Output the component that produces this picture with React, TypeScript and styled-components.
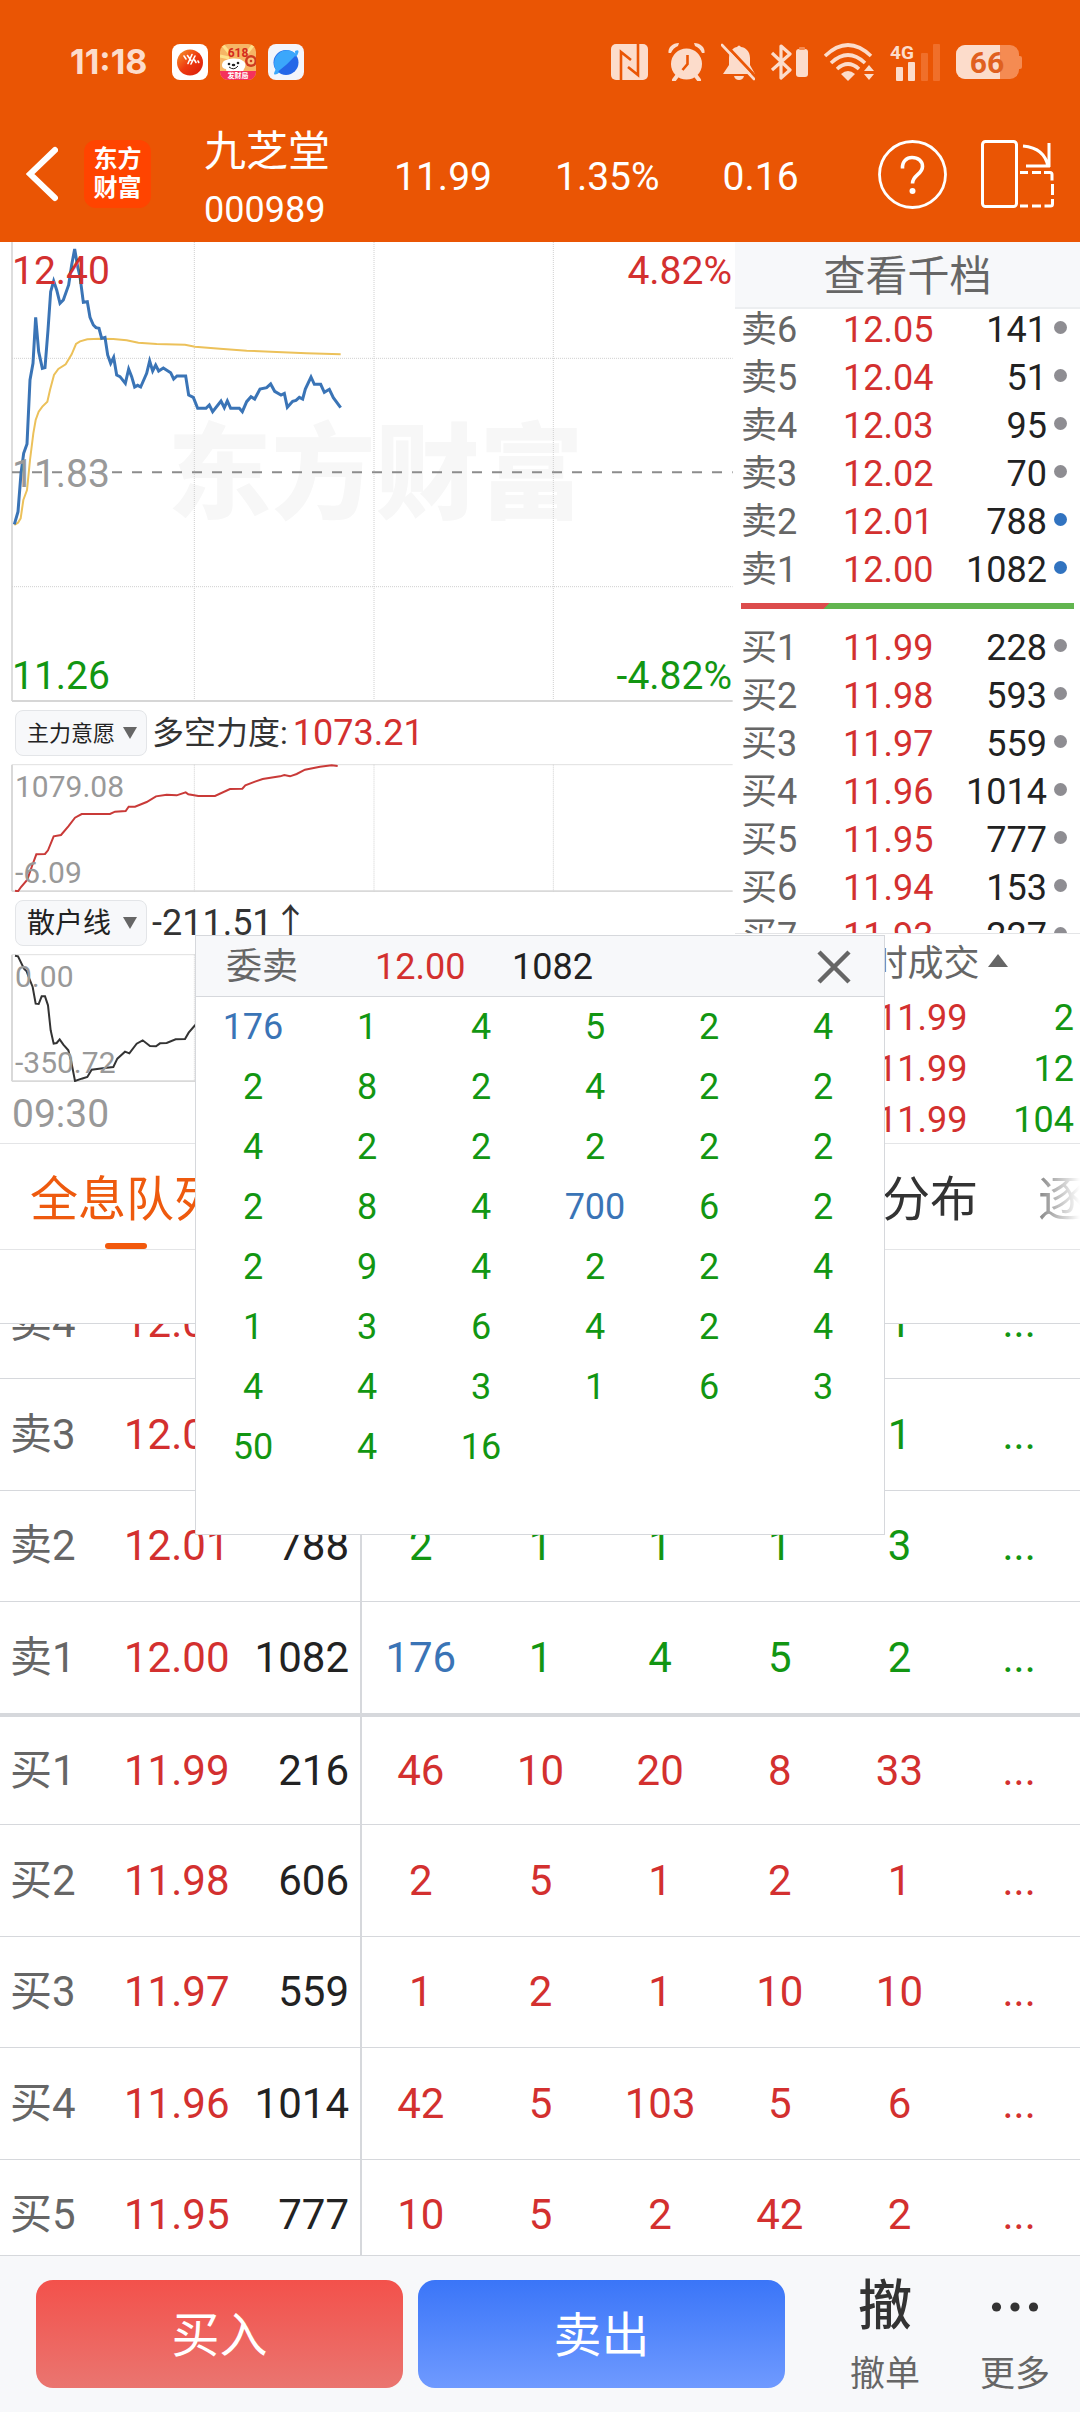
import React, { useLayoutEffect, useRef } from "react";
import styled, { createGlobalStyle } from "styled-components";

const C = {
  brand: "#ea5504",
  red: "#d3302f",
  green: "#129612",
  blue: "#3a74b6",
  ink: "#222222",
  text: "#333333",
  muted: "#666666",
  faint: "#999999",
  line: "#d6d8dc",
  soft: "#e4e5e7",
  panel: "#f7f8fa",
  status: "#fcdccb",
};

const Global = createGlobalStyle`
  * { box-sizing: border-box; }
  html, body { margin: 0; background: #fff; }
  body, button, select {
    font-family: Roboto, "Noto Sans CJK SC", sans-serif;
    color: ${C.text};
  }
  button { margin: 0; padding: 0; border: 0; background: none; cursor: pointer; }
  svg { display: block; }
`;

type Tone = "red" | "green" | "blue" | "ink" | "muted" | "faint";

const Page = styled.div`
  position: relative;
  display: flex;
  flex-direction: column;
  height: 100vh;
  overflow: hidden;
  background: #fff;
`;

/* ---------- header ---------- */

const Header = styled.header`
  flex: none;
  background: ${C.brand};
  color: #fff;
`;

const StatusBar = styled.div`
  display: flex;
  align-items: center;
  justify-content: space-between;
  height: 106px;
  padding: 18px 58px 0 70px;
`;

const StatusGroup = styled.div<{ $gap: number }>`
  display: flex;
  align-items: center;
  gap: ${(p) => p.$gap}px;
`;

const Clock = styled.span`
  width: 90px;
  font-family: Inter, Roboto, sans-serif;
  font-size: 34px;
  line-height: 40px;
  font-weight: 700;
  color: ${C.status};
`;

const TitleBar = styled.div`
  display: flex;
  align-items: center;
  height: 136px;
  padding: 0 26px;
`;

const Brand = styled.div`
  display: flex;
  flex-direction: column;
  justify-content: center;
  width: 67px;
  height: 68px;
  margin-left: 26px;
  border-radius: 12px;
  background: #ff4400;
  text-align: center;
  font-size: 24px;
  line-height: 29px;
  font-weight: 700;
`;

const StockName = styled.h1`
  margin: 0 0 0 53px;
  padding-top: 14px;
  font-size: 42px;
  line-height: 58px;
  font-weight: 400;
`;

const StockCode = styled.span`
  display: block;
  font-size: 36px;
  line-height: 58px;
`;

const Quote = styled.div`
  display: flex;
  flex: 1;
  gap: 63px;
  margin-left: 64px;
  padding-top: 6px;
  font-size: 39px;
  line-height: 48px;
`;

const HeaderActions = styled.div`
  display: flex;
  gap: 34px;
`;

/* ---------- market section ---------- */

const Market = styled.section`
  flex: none;
  display: grid;
  grid-template-columns: minmax(0, 1fr) 345px;
  height: 902px;
  border-bottom: 1px solid ${C.soft};
`;

const ChartColumn = styled.div`
  display: flex;
  flex-direction: column;
  min-width: 0;
`;

const ChartBox = styled.div<{ $h: number }>`
  position: relative;
  display: flex;
  flex-direction: column;
  justify-content: space-between;
  height: ${(p) => p.$h}px;
  padding-top: 3px;
`;

const Plot = styled.svg`
  position: absolute;
  inset: 0;
  width: 100%;
  height: 100%;
`;

const AxisRow = styled.div<{ $size: number; $tone: Tone }>`
  position: relative;
  display: flex;
  justify-content: space-between;
  padding: ${(p) => (p.$size > 35 ? "0 3px 0 12px" : "0 3px 0 15px")};
  font-size: ${(p) => p.$size}px;
  line-height: ${(p) => (p.$size > 35 ? 52 : 39)}px;
  color: ${(p) => C[p.$tone]};
`;

const Watermark = styled.div`
  position: absolute;
  inset: 0;
  display: flex;
  align-items: center;
  justify-content: center;
  padding: 8px 0 0 16px;
  font-size: 104px;
  line-height: 120px;
  font-weight: 900;
  color: #f7f7f7;
`;

const IndicatorRow = styled.div`
  display: flex;
  align-items: center;
  gap: 5px;
  height: 62px;
  padding-left: 15px;
`;

const Chip = styled.label<{ $size: number }>`
  display: grid;
  align-items: center;
  width: 132px;
  height: 46px;
  border: 1px solid #e3e5e8;
  border-radius: 8px;
  background: ${C.panel};

  & > * { grid-area: 1 / 1; }

  select {
    width: 100%;
    height: 44px;
    padding: 0 0 0 11px;
    border: 0;
    outline: 0;
    appearance: none;
    background: none;
    font-size: ${(p) => p.$size}px;
    color: ${C.ink};
  }
`;

const Caret = styled.span<{ $up?: boolean }>`
  justify-self: ${(p) => (p.$up ? "start" : "end")};
  margin: ${(p) => (p.$up ? "0 0 6px 8px" : "0 9px 0 0")};
  border: solid transparent;
  border-width: ${(p) => (p.$up ? "0 10px 13px" : "12px 7px 0")};
  border-bottom-color: ${(p) => (p.$up ? C.muted : "transparent")};
  border-top-color: ${(p) => (p.$up ? "transparent" : C.muted)};
  pointer-events: none;
`;

const IndicatorName = styled.span`
  font-size: 32px;
  line-height: 46px;
`;

const IndicatorValue = styled.span<{ $tone?: Tone }>`
  font-size: 36px;
  line-height: 46px;
  color: ${(p) => (p.$tone ? C[p.$tone] : C.text)};
`;

const TimeAxis = styled.div`
  padding-left: 12px;
  font-size: 39px;
  line-height: 64px;
  color: ${C.faint};
`;

/* ---------- order book ---------- */

const BookColumn = styled.div`
  display: flex;
  flex-direction: column;
  min-width: 0;
`;

const BookTitle = styled.button`
  flex: none;
  height: 67px;
  padding-top: 4px;
  border-bottom: 2px solid #eceef0;
  background: ${C.panel};
  font-size: 42px;
  line-height: 60px;
  color: ${C.muted};
`;

const SellPane = styled.div`
  display: flex;
  flex-direction: column;
  justify-content: flex-end;
  flex: none;
  height: 285px;
  overflow: hidden;
`;

const BuyPane = styled.div`
  height: 310px;
  overflow: hidden;
  border-bottom: 1px solid ${C.soft};
`;

const BookTable = styled.table`
  flex: none;
  width: 100%;
  table-layout: fixed;
  border-spacing: 0;
  font-size: 36px;
  line-height: 48px;

  th, td { padding: 0; font-weight: 400; text-align: left; }
  th { width: 108px; padding-left: 6px; color: ${C.muted}; }
`;

const PriceCell = styled.td`
  color: ${C.red};
`;

const VolumeCell = styled.td`
  && { padding-right: 1px; text-align: right; }
  color: ${C.ink};
`;

const DotCell = styled.td`
  width: 32px;
`;

const Dot = styled.i<{ $on: boolean }>`
  display: block;
  width: 13px;
  height: 13px;
  margin: 0 0 5px 6px;
  border-radius: 50%;
  background: ${(p) => (p.$on ? "#3173c0" : "#8e8d92")};
`;

const Balance = styled.div`
  flex: none;
  height: 6px;
  margin: 9px 6px 15px;
  background: linear-gradient(135deg, #dc4c4c 26%, #62b54f 26%);
`;

const TradesTitle = styled.button`
  display: grid;
  grid-template-columns: 1fr auto 1fr;
  align-items: center;
  height: 59px;
  font-size: 36px;
  line-height: 58px;
  color: ${C.muted};
`;

const TradesTable = styled.table`
  width: 100%;
  table-layout: fixed;
  border-spacing: 0;
  font-size: 36px;
  line-height: 51px;

  td { padding: 0; }
  td:first-child { width: 142px; padding-left: 6px; color: ${C.faint}; }
  td:last-child { padding-right: 6px; text-align: right; color: ${C.green}; }
`;

/* ---------- tabs ---------- */

const TabBar = styled.nav`
  flex: none;
  height: 106px;
  border-bottom: 1px solid ${C.soft};
`;

const TabTrack = styled.div`
  display: flex;
  gap: 60px;
  height: 105px;
  padding-left: 30px;
  overflow: hidden;
  mask-image: linear-gradient(to right, #000 calc(100% - 70px), transparent);
`;

const Tab = styled.button<{ $active?: boolean }>`
  display: flex;
  flex-direction: column;
  align-items: center;
  justify-content: space-between;
  flex: none;
  font-size: 48px;
  line-height: 48px;
  padding-top: 32px;
  color: ${(p) => (p.$active ? "#ee5a0e" : C.text)};

  &::after {
    content: "";
    width: 42px;
    height: 6px;
    border-radius: 3px;
    background: ${(p) => (p.$active ? "#f2590d" : "transparent")};
  }
`;

const ListHead = styled.div`
  flex: none;
  height: 74px;
  border-bottom: 1px solid ${C.line};
`;

/* ---------- queue table ---------- */

const QueueView = styled.div`
  flex: 1;
  min-height: 0;
  overflow-y: auto;
  scrollbar-width: none;
`;

const QueueTable = styled.table`
  width: 100%;
  table-layout: fixed;
  border-spacing: 0;
  font-size: 42px;
  line-height: 50px;

  th, td {
    height: 111px;
    padding: 0 2px 0 0;
    border-bottom: 1px solid ${C.line};
    font-weight: 400;
    text-align: center;
  }
  tr:nth-child(even) > * { height: 112px; }
  th { width: 124px; padding-left: 10px; text-align: left; color: ${C.muted}; }
`;

const QueueRow = styled.tr<{ $side: "sell" | "buy"; $first: boolean }>`
  color: ${(p) => (p.$side === "sell" ? C.green : C.red)};
  & > * { border-top: ${(p) => (p.$first ? `3px solid ${C.line}` : "0")}; }
`;

const QueuePrice = styled.td`
  && { width: 116px; text-align: left; }
  color: ${C.red};
`;

const QueueVolume = styled.td`
  && { width: 122px; padding-right: 11px; text-align: right; border-right: 2px solid ${C.line}; }
  color: ${C.ink};
`;

const Big = styled.span`
  color: ${C.blue};
`;

/* ---------- bottom bar ---------- */

const TradeBar = styled.footer`
  flex: none;
  display: flex;
  align-items: flex-start;
  height: 157px;
  padding: 24px 0 0 36px;
  border-top: 1px solid ${C.line};
  background: ${C.panel};
`;

const TradeButton = styled.button<{ $side: "buy" | "sell" }>`
  flex: 1;
  height: 108px;
  margin-right: 15px;
  padding-top: 4px;
  border-radius: 17px;
  background: ${(p) =>
    p.$side === "buy"
      ? "linear-gradient(#f3514b, #ea7570)"
      : "linear-gradient(#3a75f8, #6f9aff)"};
  font-size: 48px;
  line-height: 104px;
  color: #fff;
`;

const SideActions = styled.div`
  display: grid;
  grid-template-columns: 130px 130px;
  margin-left: 20px;
`;

const SideButton = styled.button`
  display: flex;
  flex-direction: column;
  align-items: center;
  font-size: 35px;
  line-height: 56px;
  color: ${C.muted};
`;

const SideGlyph = styled.span`
  display: flex;
  align-items: center;
  height: 54px;
  margin-bottom: 13px;
  font-size: 54px;
  line-height: 54px;
  font-weight: 500;
  color: ${C.text};
`;

/* ---------- queue popup ---------- */

const Popup = styled.section`
  position: absolute;
  left: 195px;
  right: 195px;
  top: 935px;
  height: 600px;
  border: 1px solid ${C.line};
  background: #fff;
`;

const PopupHead = styled.header`
  display: grid;
  grid-template-columns: 149px 137px 1fr auto;
  align-items: center;
  height: 61px;
  padding: 2px 33px 0 30px;
  border-bottom: 1px solid ${C.line};
  background: ${C.panel};
  font-size: 36px;
  line-height: 58px;
`;

const Toned = styled.span<{ $tone: Tone }>`
  color: ${(p) => C[p.$tone]};
`;

const LotGrid = styled.ol`
  display: grid;
  grid-template-columns: repeat(6, 1fr);
  margin: 0;
  padding: 0 4px 0 0;
  list-style: none;
  text-align: center;
  font-size: 36px;
  line-height: 60px;
`;

const Lot = styled.li<{ $big: boolean }>`
  color: ${(p) => (p.$big ? C.blue : C.green)};
`;

/* ---------- data ---------- */

type Level = [string, string, string];

const sells: Level[] = [
  ["卖6", "12.05", "141"],
  ["卖5", "12.04", "51"],
  ["卖4", "12.03", "95"],
  ["卖3", "12.02", "70"],
  ["卖2", "12.01", "788"],
  ["卖1", "12.00", "1082"],
];

const buys: Level[] = [
  ["买1", "11.99", "228"],
  ["买2", "11.98", "593"],
  ["买3", "11.97", "559"],
  ["买4", "11.96", "1014"],
  ["买5", "11.95", "777"],
  ["买6", "11.94", "153"],
  ["买7", "11.93", "227"],
];

const queue: [string, string, string, number[]][] = [
  ["卖4", "12.03", "95", [2, 1, 1, 2, 1]],
  ["卖3", "12.02", "70", [2, 1, 2, 1, 1]],
  ["卖2", "12.01", "788", [2, 1, 1, 1, 3]],
  ["卖1", "12.00", "1082", [176, 1, 4, 5, 2]],
  ["买1", "11.99", "216", [46, 10, 20, 8, 33]],
  ["买2", "11.98", "606", [2, 5, 1, 2, 1]],
  ["买3", "11.97", "559", [1, 2, 1, 10, 10]],
  ["买4", "11.96", "1014", [42, 5, 103, 5, 6]],
  ["买5", "11.95", "777", [10, 5, 2, 42, 2]],
];

const lots = [
  176, 1, 4, 5, 2, 4, 2, 8, 2, 4, 2, 2, 4, 2, 2, 2, 2, 2, 2, 8, 4, 700, 6, 2,
  2, 9, 4, 2, 2, 4, 1, 3, 6, 4, 2, 4, 4, 4, 3, 1, 6, 3, 50, 4, 16,
];

const priceLine =
  "43,853 54,815 63,700 71,640 81,612 90,420 99,370 107,232 116,335 127,385 135,383 144,270 152,155 161,123 170,150 180,190 190,180 206,135 215,75 224,27 233,80 240,110 250,187 262,185 270,232 280,255 288,263 297,265 305,295 315,292 323,345 332,370 341,352 350,405 360,410 376,430 386,387 395,410 404,441 413,436 422,441 440,400 449,363 458,393 467,375 476,393 490,384 512,398 521,417 531,408 557,408 566,465 580,472 593,505 618,505 628,495 638,515 663,483 673,503 682,483 692,505 718,505 727,515 740,485 753,470 764,477 780,447 800,443 812,432 824,454 843,465 853,460 862,502 878,484 888,481 898,472 908,477 916,447 933,411 943,433 962,433 973,457 988,448 1000,473 1022,503";
const averageLine =
  "43,855 54,848 62,835 70,780 81,750 90,660 100,580 107,540 116,515 127,500 142,485 150,450 162,405 175,387 197,373 215,343 228,312 240,304 262,298 300,296 340,297 380,301 415,308 470,312 555,314 585,320 660,326 740,332 830,336 920,340 1022,343";
const forceLine =
  "45,571 54,573 63,560 82,538 95,500 109,462 135,461 144,450 161,408 183,404 205,378 225,352 245,341 330,341 345,334 377,332 386,319 405,319 440,305 468,288 500,283 530,285 557,276 565,282 595,287 645,287 690,266 727,265 736,255 765,244 788,236 840,228 853,224 870,228 890,221 915,208 960,199 995,195 1013,197";
const retailLine =
  "45,196 54,198 72,235 80,243 88,265 98,290 107,340 116,341 125,318 135,318 144,345 152,420 161,460 170,458 179,447 190,463 205,480 213,510 225,572 245,565 262,560 275,538 320,532 340,530 352,505 375,484 388,489 410,460 428,450 450,467 468,468 480,459 500,458 527,447 555,446 566,427 585,405 640,400 760,410 880,395 1013,405";

const gridX = [583, 1122, 1660];

/* ---------- icons ---------- */

const AppIcons = () => (
  <>
    <svg width="36" height="36" viewBox="0 0 36 36">
      <defs>
        <linearGradient id="ball" x1="0" y1="0" x2="1" y2="1">
          <stop offset="0" stopColor="#f79a2c" />
          <stop offset=".5" stopColor="#ee3a10" />
          <stop offset="1" stopColor="#d81a0a" />
        </linearGradient>
      </defs>
      <rect width="36" height="36" rx="8" fill="#fff" />
      <circle cx="18" cy="18.500" r="13" fill="url(#ball)" />
      <path d="M12 12l2 3M15.500 11.500l3.500 5M20 10.500l-4 9M23 12l-4 8M22.500 16l1.500 2.500M26 17l.8 1.500" stroke="#fff" strokeWidth="1.600" strokeLinecap="round" />
    </svg>
    <svg width="36" height="36" viewBox="0 0 36 36">
      <defs>
        <clipPath id="jd"><rect width="36" height="36" rx="8" /></clipPath>
      </defs>
      <g clipPath="url(#jd)">
        <rect width="36" height="36" fill="#f6b565" />
        <path d="M2 0l8 10M34 0l-7 9M0 12l9 2" stroke="#fde08a" strokeWidth="3" />
        <circle cx="31" cy="17" r="6" fill="#cf3a20" />
        <circle cx="31" cy="17" r="3.500" fill="#f9c37c" />
        <circle cx="31" cy="17" r="1.300" fill="#cf3a20" />
        <path d="M3 18c3-4 17-5 20-1 3 1 3 6 1 8l-2 5H7l-1-5c-4 0-5-4-3-7z" fill="#fff" />
        <circle cx="9" cy="20" r="1.300" fill="#222" />
        <circle cx="18" cy="19" r="1.300" fill="#222" />
        <ellipse cx="13.500" cy="21" rx="1.800" ry="1.200" fill="#222" />
        <path d="M9 23q5 4 9-1" stroke="#222" fill="none" />
        <rect y="27" width="36" height="9" fill="#f4315c" />
        <text x="18" y="13" textAnchor="middle" fontSize="12" fontWeight="700" fill="#d52a1c">618</text>
        <text x="18" y="34" textAnchor="middle" fontSize="7" fontWeight="700" fill="#fff">发财局</text>
      </g>
    </svg>
    <svg width="36" height="36" viewBox="0 0 36 36">
      <rect width="36" height="36" rx="8" fill="#f3f5fb" />
      <circle cx="18" cy="18.500" r="12.500" fill="#2467e8" />
      <path d="M9.500 28A12.500 12.500 0 1 1 28.500 10.500Q20 20 9.500 28z" fill="#3ba7fb" />
      <path d="M27 7q4-2 3.500 1-.5 3-3 5zM8 25q-3 5-1.500 5.500 2 .5 5-2z" fill="#3ba7fb" />
    </svg>
  </>
);

const S = C.status;

const StatusIcons = () => (
  <>
    <svg width="41" height="38" viewBox="0 0 41 38">
      <rect y="1" width="37" height="36" rx="5" fill={S} />
      <path d="M10 37V9L20 17M27 1V32L17 24" fill="none" stroke={C.brand} strokeWidth="2.600" />
    </svg>
    <svg width="37" height="38" viewBox="0 0 37 38">
      <circle cx="18.500" cy="21" r="15.500" fill={S} />
      <path d="M9 33l-3 4M28 33l3 4" stroke={S} strokeWidth="4" strokeLinecap="round" />
      <path d="M.5 10Q0 6 3 3t8-3l-1 3Q5 5 3 10zM36.500 10Q37 6 34 3t-8-3l1 3q5 2 7 7z" fill={S} />
      <path d="M19.500 12v9l-5 6" fill="none" stroke={C.brand} strokeWidth="2.600" />
    </svg>
    <svg width="34" height="38" viewBox="0 0 34 38">
      <path d="M2 31l6-9V15C8 8 13 4 16 4q2-3 4 0c4 0 9 4 9 11v7l5 9z" fill={S} />
      <path d="M13 33h10q-1 4-5 4t-5-4z" fill={S} />
      <path d="M3 0L36 35" stroke={C.brand} strokeWidth="3" />
      <path d="M1 2L33 36" stroke={S} strokeWidth="2.600" strokeLinecap="round" />
    </svg>
    <svg width="37" height="38" viewBox="0 0 37 38">
      <path d="M1 10l18 17-9 8V3l9 8L1 27" fill="none" stroke={S} strokeWidth="3.200" strokeLinejoin="round" />
      <rect x="25" y="6" width="12" height="28" rx="3" fill={S} />
      <rect x="28" y="4" width="6" height="3" rx="1" fill="#f58b52" />
    </svg>
    <svg width="50" height="38" viewBox="1 0 50 38">
      <g fill="none" stroke={S} strokeWidth="3.600">
        <path d="M2 13Q25-9 48 13" />
        <path d="M8 20Q25 4 42 20" />
        <path d="M14 26Q25 16 36 26" />
      </g>
      <path d="M18 31q7-6 14 0l-7 7z" fill={S} />
      <path d="M46 22l5 6H41zM46 37l5-6H41z" fill={S} />
    </svg>
    <svg width="50" height="38" viewBox="1 0 50 38">
      <text x="1" y="16" fontSize="19" fontWeight="700" fill={S} fontFamily="Roboto, sans-serif">4G</text>
      <rect x="7" y="24" width="7" height="14" rx="1" fill={S} />
      <rect x="19" y="19" width="7" height="19" rx="1" fill={S} />
      <rect x="32" y="10" width="7" height="28" rx="1" fill="#f06f2a" />
      <rect x="44" y="1" width="7" height="37" rx="1" fill="#f06f2a" />
    </svg>
    <svg width="66" height="36" viewBox="0 0 66 36">
      <defs>
        <clipPath id="cell"><rect y="1" width="63" height="34" rx="9" /></clipPath>
      </defs>
      <rect x="60" y="12" width="6" height="13" rx="2" fill="#f58b52" />
      <g clipPath="url(#cell)">
        <rect width="63" height="36" fill="#f58b52" />
        <rect width="44" height="36" fill={S} />
      </g>
      <text x="31" y="29" textAnchor="middle" fontSize="30" fontWeight="700" fill="#e0601f" fontFamily="Roboto, sans-serif">66</text>
    </svg>
  </>
);

const BackIcon = () => (
  <svg width="32" height="56" viewBox="0 0 32 56">
    <path d="M29 4L4 28L29 52" fill="none" stroke="#fff" strokeWidth="6" strokeLinecap="round" strokeLinejoin="miter" />
  </svg>
);

const HelpIcon = () => (
  <svg width="69" height="69" viewBox="0 0 69 69" fill="none" stroke="#fff">
    <circle cx="34.500" cy="34.500" r="33" strokeWidth="2.800" />
    <path d="M24.500 28.500C24 21 29 17.500 34 17.500c6 0 10.500 3.500 10.500 9 0 8-10 8.500-10 17" strokeWidth="3.600" />
    <circle cx="34.500" cy="51" r="3" fill="#fff" stroke="none" />
  </svg>
);

const RotateIcon = () => (
  <svg width="73" height="68" viewBox="0 0 73 68" fill="none" stroke="#fff" strokeWidth="3">
    <rect x="1.500" y="1.500" width="34" height="65" rx="3" />
    <path d="M42 6q22 2 25 21M45 26h24M68 3v24" />
    <path d="M39 32.500h8M51 32.500h9M63 32.500h6q2 0 2 2v6M71.500 44v11M71.500 59v5q0 2-2 2h-6M60 66h-9M47 66h-8" />
  </svg>
);

const CloseIcon = () => (
  <svg width="34" height="34" viewBox="0 0 34 34">
    <path d="M2 2L32 32M32 2L2 32" stroke={C.muted} strokeWidth="4.500" />
  </svg>
);

const MoreIcon = () => (
  <svg width="48" height="12" viewBox="0 0 48 12" fill={C.text}>
    <circle cx="5.500" cy="6" r="4.600" />
    <circle cx="24" cy="6" r="4.600" />
    <circle cx="42.500" cy="6" r="4.600" />
  </svg>
);

/* ---------- parts ---------- */

const thin = { vectorEffect: "non-scaling-stroke" as const, fill: "none" };

const MainPlot = () => (
  <Plot viewBox="0 6 2205 1380" preserveAspectRatio="none">
    <path d="M36 6V1383" {...thin} stroke="#dddddd" strokeWidth="2" />
    {gridX.map((x) => (
      <path key={x} d={`M${x} 6V1383`} {...thin} stroke="#d0d0d0" strokeWidth="1" strokeDasharray="1 1" />
    ))}
    <path d="M36 355H2198M36 1040H2198" {...thin} stroke="#d0d0d0" strokeWidth="1" strokeDasharray="1 1" />
    <path d="M36 697H2198" {...thin} stroke="#8c8c8c" strokeWidth="2" strokeDasharray="10 10" />
    <path d="M36 1383H2198" {...thin} stroke="#d6d6d6" strokeWidth="2" />
    <polyline points={averageLine} {...thin} stroke="#ecc15a" strokeWidth="2" />
    <polyline points={priceLine} {...thin} stroke={C.blue} strokeWidth="3" />
  </Plot>
);

const SubPlot = ({ line, color }: { line: string; color: string }) => (
  <Plot viewBox="0 191 2205 384" preserveAspectRatio="none">
    <path d="M36 193V573M36 573H2198" {...thin} stroke="#d9d9d9" strokeWidth="2" />
    <path d="M36 193H2198" {...thin} stroke="#e0e0e0" strokeWidth="1" />
    {gridX.map((x) => (
      <path key={x} d={`M${x} 193V573`} {...thin} stroke="#d0d0d0" strokeWidth="1" strokeDasharray="1 1" />
    ))}
    <polyline points={line} {...thin} stroke={color} strokeWidth="2" />
  </Plot>
);

const Levels = ({ rows }: { rows: Level[] }) => (
  <BookTable>
    <tbody>
      {rows.map(([name, price, volume]) => (
        <tr key={name}>
          <th scope="row">{name}</th>
          <PriceCell>{price}</PriceCell>
          <VolumeCell>{volume}</VolumeCell>
          <DotCell>
            <Dot $on={name === "卖1" || name === "卖2"} />
          </DotCell>
        </tr>
      ))}
    </tbody>
  </BookTable>
);

export default function App() {
  const view = useRef<HTMLDivElement>(null);

  useLayoutEffect(() => {
    if (view.current) view.current.scrollTop = 56;
  }, []);

  return (
    <Page>
      <Global />
      <Header>
        <StatusBar>
          <StatusGroup $gap={12}>
            <Clock>11:18</Clock>
            <AppIcons />
          </StatusGroup>
          <StatusGroup $gap={16}>
            <StatusIcons />
          </StatusGroup>
        </StatusBar>
        <TitleBar>
          <button aria-label="返回"><BackIcon /></button>
          <Brand>
            <span>东方</span>
            <span>财富</span>
          </Brand>
          <StockName>
            九芝堂
            <StockCode>000989</StockCode>
          </StockName>
          <Quote>
            <span>11.99</span>
            <span>1.35%</span>
            <span>0.16</span>
          </Quote>
          <HeaderActions>
            <button aria-label="帮助"><HelpIcon /></button>
            <button aria-label="横屏"><RotateIcon /></button>
          </HeaderActions>
        </TitleBar>
      </Header>

      <Market>
        <ChartColumn>
          <ChartBox $h={460}>
            <Watermark aria-hidden="true">东方财富</Watermark>
            <MainPlot />
            <AxisRow $size={39} $tone="red"><span>12.40</span><span>4.82%</span></AxisRow>
            <AxisRow $size={39} $tone="faint"><span>11.83</span></AxisRow>
            <AxisRow $size={39} $tone="green"><span>11.26</span><span>-4.82%</span></AxisRow>
          </ChartBox>
          <IndicatorRow>
            <Chip $size={22}>
              <select aria-label="指标一"><option>主力意愿</option></select>
              <Caret />
            </Chip>
            <IndicatorName>多空力度:</IndicatorName>
            <IndicatorValue $tone="red">1073.21</IndicatorValue>
          </IndicatorRow>
          <ChartBox $h={128}>
            <SubPlot line={forceLine} color="#c93a38" />
            <AxisRow $size={30} $tone="faint"><span>1079.08</span></AxisRow>
            <AxisRow $size={30} $tone="faint"><span>-6.09</span></AxisRow>
          </ChartBox>
          <IndicatorRow>
            <Chip $size={28}>
              <select aria-label="指标二"><option>散户线</option></select>
              <Caret />
            </Chip>
            <IndicatorValue>-211.51↑</IndicatorValue>
          </IndicatorRow>
          <ChartBox $h={128}>
            <SubPlot line={retailLine} color="#333333" />
            <AxisRow $size={30} $tone="faint"><span>0.00</span></AxisRow>
            <AxisRow $size={30} $tone="faint"><span>-350.72</span></AxisRow>
          </ChartBox>
          <TimeAxis>09:30</TimeAxis>
        </ChartColumn>

        <BookColumn>
          <BookTitle>查看千档</BookTitle>
          <SellPane><Levels rows={sells} /></SellPane>
          <Balance />
          <BuyPane><Levels rows={buys} /></BuyPane>
          <TradesTitle>
            <i />
            <span>分时成交</span>
            <Caret $up />
          </TradesTitle>
          <TradesTable>
            <tbody>
              {["2", "12", "104"].map((n) => (
                <tr key={n}>
                  <td>11:18</td>
                  <PriceCell>11.99</PriceCell>
                  <td>{n}</td>
                </tr>
              ))}
            </tbody>
          </TradesTable>
        </BookColumn>
      </Market>

      <TabBar>
        <TabTrack>
          <Tab $active>全息队列</Tab>
          <Tab>全息盘口</Tab>
          <Tab>成交明细</Tab>
          <Tab>成交分布</Tab>
          <Tab>逐笔委托</Tab>
        </TabTrack>
      </TabBar>
      <ListHead />

      <QueueView ref={view}>
        <QueueTable>
          <tbody>
            {queue.map(([name, price, volume, orders]) => (
              <QueueRow key={name} $side={name[0] === "卖" ? "sell" : "buy"} $first={name === "买1"}>
                <th scope="row">{name}</th>
                <QueuePrice>{price}</QueuePrice>
                <QueueVolume>{volume}</QueueVolume>
                {orders.map((n, i) => (
                  <td key={i}>{n > 150 ? <Big>{n}</Big> : n}</td>
                ))}
                <td>...</td>
              </QueueRow>
            ))}
          </tbody>
        </QueueTable>
      </QueueView>

      <TradeBar>
        <TradeButton $side="buy">买入</TradeButton>
        <TradeButton $side="sell">卖出</TradeButton>
        <SideActions>
          <SideButton>
            <SideGlyph>撤</SideGlyph>
            撤单
          </SideButton>
          <SideButton>
            <SideGlyph><MoreIcon /></SideGlyph>
            更多
          </SideButton>
        </SideActions>
      </TradeBar>

      <Popup aria-label="委卖队列">
        <PopupHead>
          <Toned $tone="muted">委卖</Toned>
          <Toned $tone="red">12.00</Toned>
          <Toned $tone="ink">1082</Toned>
          <button aria-label="关闭"><CloseIcon /></button>
        </PopupHead>
        <LotGrid>
          {lots.map((n, i) => (
            <Lot key={i} $big={n > 150}>{n}</Lot>
          ))}
        </LotGrid>
      </Popup>
    </Page>
  );
}
